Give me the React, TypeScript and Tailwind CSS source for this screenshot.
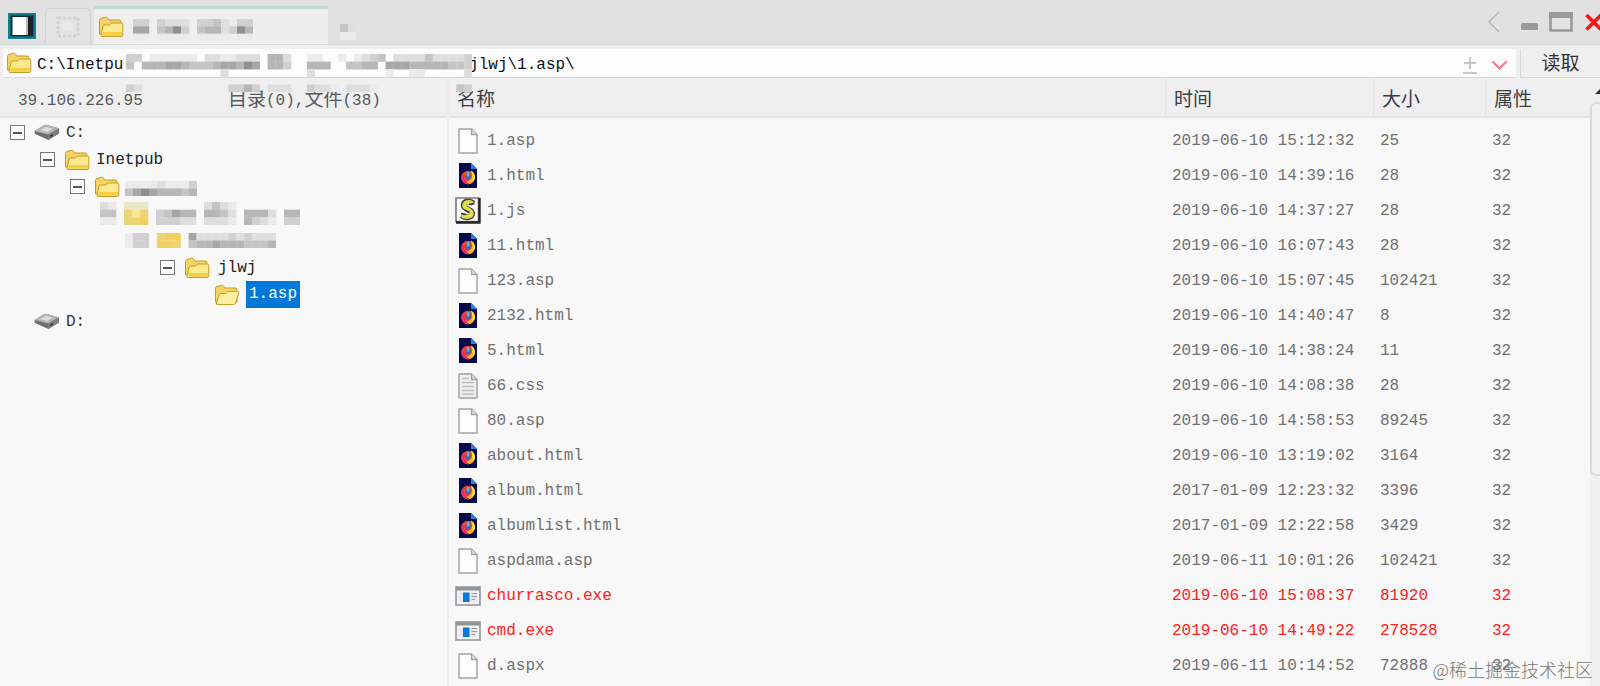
import { useState } from "react";

type Kind = "page" | "html" | "script" | "text" | "exe";

type FileRow = {
  name: string;
  time: string;
  size: string;
  kind: Kind;
};

const files: FileRow[] = [
  { name: "1.asp", time: "2019-06-10 15:12:32", size: "25", kind: "page" },
  { name: "1.html", time: "2019-06-10 14:39:16", size: "28", kind: "html" },
  { name: "1.js", time: "2019-06-10 14:37:27", size: "28", kind: "script" },
  { name: "11.html", time: "2019-06-10 16:07:43", size: "28", kind: "html" },
  { name: "123.asp", time: "2019-06-10 15:07:45", size: "102421", kind: "page" },
  { name: "2132.html", time: "2019-06-10 14:40:47", size: "8", kind: "html" },
  { name: "5.html", time: "2019-06-10 14:38:24", size: "11", kind: "html" },
  { name: "66.css", time: "2019-06-10 14:08:38", size: "28", kind: "text" },
  { name: "80.asp", time: "2019-06-10 14:58:53", size: "89245", kind: "page" },
  { name: "about.html", time: "2019-06-10 13:19:02", size: "3164", kind: "html" },
  { name: "album.html", time: "2017-01-09 12:23:32", size: "3396", kind: "html" },
  { name: "albumlist.html", time: "2017-01-09 12:22:58", size: "3429", kind: "html" },
  { name: "aspdama.asp", time: "2019-06-11 10:01:26", size: "102421", kind: "page" },
  { name: "churrasco.exe", time: "2019-06-10 15:08:37", size: "81920", kind: "exe" },
  { name: "cmd.exe", time: "2019-06-10 14:49:22", size: "278528", kind: "exe" },
  { name: "d.aspx", time: "2019-06-11 10:14:52", size: "72888", kind: "page" },
];

// one letter per mosaic block, light to dark, plus a few yellows for folders
const shades: Record<string, string> = {
  a: "#ebebeb",
  b: "#dedede",
  c: "#d0d0d0",
  d: "#c4c4c4",
  e: "#b6b6b6",
  f: "#a6a6a6",
  g: "#909090",
  w: "#f8ea92",
  y: "#ebe6c6",
  Y: "#e9d578",
  o: "#f0d060",
};

const tabMosaic = ["cc cbbb ccdbacc", "ff degc deebcge", "aa aaaa aaaa aa"];
const pathMosaic = [
  "cc aaaaaa bbaabbb eeb  aa  a abcd bbbbdbbbbc",
  "d eeeffedddeffegf eec  eee  ddee fffeeeeeddc",
  "            b          b         a  aa     b",
  "",
  "cb           ccec bbb  cbba bbba          dc",
];

function Mosaic({ rows, width, height, className }: { rows: string[]; width: number; height: number; className?: string }) {
  const cols = Math.max(...rows.map((row) => row.length));
  return (
    <svg
      width={width}
      height={height}
      viewBox={`0 0 ${cols} ${rows.length}`}
      preserveAspectRatio="none"
      className={className}
      aria-hidden="true"
    >
      {rows.map((row, y) =>
        row.split("").map((c, x) => shades[c] && <rect key={`${x}-${y}`} x={x} y={y} width="1.03" height="1.03" fill={shades[c]} />)
      )}
    </svg>
  );
}

function Folder({ open = false }: { open?: boolean }) {
  return (
    <svg width="26" height="22" viewBox="0 0 26 22" className="shrink-0" aria-hidden="true">
      <path d="M1.5 18V4.5Q1.5 3 3 2.5L7.5 1.2Q9 1 9.6 2.2L10.5 4H21Q23 4 23 6V18Z" fill="#f3d465" stroke="#c39a2a" />
      {open ? (
        <path d="M3 20.5Q1.8 20.5 2.3 19L5.5 10.5Q6 9.5 7 9.5H12L14 7.5H23.5Q25.3 7.5 24.8 9L21.5 19.2Q21 20.5 19.5 20.5Z" fill="#fdf0a0" stroke="#c79c22" />
      ) : (
        <>
          <path d="M4 20.5Q3 20.5 3 19.5L5 10Q5.2 9 6.3 9H11.5L13.5 7H23.5Q24.8 7 24.8 8.3V18.8Q24.8 20.5 23 20.5Z" fill="#fbe98f" stroke="#c79c22" />
          <path d="M4.5 16H24V18.6Q24 19.8 22.8 19.8H4.6Z" fill="#f3cf48" />
        </>
      )}
    </svg>
  );
}

function Drive() {
  return (
    <svg width="26" height="17" viewBox="0 0 26 17" className="shrink-0" aria-hidden="true">
      <path d="M0.5 7L10 1.2Q11.5 .6 13 1L25 4.5V9.5L14.5 16L1 10Z" fill="#6d6d6d" />
      <path d="M0.5 7L10 1.2Q11.5 .6 13 1L25 4.5L14 10.5Z" fill="#b4b4b4" />
      <path d="M6 6.2L12 3L19 4.8L13.5 8Z" fill="#dcdcdc" />
      <path d="M14 10.5V16L25 9.5V4.5Z" fill="#7e7e7e" />
      <path d="M16 12.5L19 10.8" stroke="#333" strokeWidth="1.5" />
    </svg>
  );
}

function FileIcon({ kind }: { kind: Kind }) {
  if (kind === "html") {
    return (
      <svg width="18" height="25" viewBox="0 0 18 25" aria-hidden="true">
        <path d="M0 0H12L18 6V25H0Z" fill="#050a4c" />
        <path d="M12 0L18 6H12Z" fill="#2f7fe0" />
        <circle cx="9" cy="14.5" r="6.8" fill="#f4402f" />
        <path d="M5 19.5Q9 22.5 13 20Q17 16.5 15.5 11.5Q14 8.5 12 7.5Q13.5 12 12.5 15.5Q10 18.5 5 19.5Z" fill="#fdb62c" />
        <path d="M2.2 13Q2 18.5 6.5 20.8Q9 21.5 10 20.5Q5 18.5 4.5 12Z" fill="#ee2a6c" />
        <path d="M12 7.5Q17 11 15.8 16Q15 17.5 13.5 18Q14.5 12.5 12 7.5Z" fill="#ffe94a" />
        <circle cx="9" cy="13.8" r="2.8" fill="#4d62a8" />
        <path d="M9 9V13.5" stroke="#58b8d8" strokeWidth="2.4" />
      </svg>
    );
  }
  if (kind === "script") {
    return (
      <svg width="26" height="27" viewBox="0 0 26 27" aria-hidden="true">
        <path d="M1 1H23.5V24.5H1Z" fill="#fff" stroke="#777" strokeWidth="1.6" />
        <path d="M24.5 1V25.5H1" fill="none" stroke="#222" strokeWidth="2.4" />
        <path d="M18.5 6.5C14 2.5 7 4.5 9 9.5C11 13 18.5 12.5 17 17.5C15.5 21.5 9 20.5 6.5 18.5" fill="none" stroke="#444" strokeWidth="5.8" />
        <path d="M17.5 6.5C14 3.5 8 5.5 9.5 9.5C11 12.5 18 13 16.5 17.5C15 20.5 9 20 7 18.5" fill="none" stroke="#e3e04b" strokeWidth="4" />
        <path d="M14 7.5L19.5 6.5M9.5 13L14.5 15.5M6 16.5L11 17.5" stroke="#333" strokeWidth="1.4" />
      </svg>
    );
  }
  if (kind === "exe") {
    return (
      <svg width="26" height="20" viewBox="0 0 26 20" aria-hidden="true">
        <path d="M1 1H25V19H1Z" fill="#f3f3f3" stroke="#8f9499" strokeWidth="1.6" />
        <path d="M1 1H25V4.5H1Z" fill="#8f9499" />
        <path d="M4 7H22V16.5H4Z" fill="#e6eaee" />
        <path d="M8 6.5H14.5V16H8Z" fill="#0b78d8" />
        <path d="M16.5 7.5H22M16.5 10.5H22M16.5 13.5H20" stroke="#9a9a9a" strokeWidth="1.2" />
      </svg>
    );
  }
  return (
    <svg width="20" height="26" viewBox="0 0 20 26" aria-hidden="true">
      <path
        d="M1 1.5Q1 1 1.5 1H13.5L19 6.5V24.5Q19 25 18.5 25H1.5Q1 25 1 24.5Z"
        fill={kind === "text" ? "#f0f0f0" : "#fcfcfc"}
        stroke="#a3a3a3"
        strokeWidth="1.5"
      />
      <path d="M13.5 1V6.5H19" fill="#dcdcdc" stroke="#a3a3a3" strokeWidth="1.3" />
      {kind === "text" && <path d="M4 5.5H11M4 9.5H16M4 13.5H16M4 17.5H16M4 21H16" stroke="#bcbcbc" strokeWidth="1.4" />}
    </svg>
  );
}

function Expander() {
  return (
    <button type="button" aria-label="collapse" className="grid size-[15px] shrink-0 place-items-center border border-[#777] bg-[#fbfbfb]">
      <span className="h-[2px] w-[9px] bg-[#555]" />
    </button>
  );
}

function TitleBar() {
  return (
    <header className="flex h-[45px] items-end border-b border-[#d3dcda] bg-[#e1e1e1]">
      <button type="button" aria-label="panel" className="mb-1 ml-2 h-7 w-7">
        <svg width="28" height="28" viewBox="0 0 28 28" aria-hidden="true">
          <path d="M0 1H28V27H0Z" fill="#12818f" />
          <path d="M2.5 3.5H25.5V24.5H2.5Z" fill="#0c2d38" />
          <path d="M4.5 5H18V23H4.5Z" fill="#fff" />
          <path d="M18 5H20V23H18Z" fill="#b9b9b9" />
          <path d="M20 5H23V23H20Z" fill="#222" />
        </svg>
      </button>
      <button type="button" aria-label="view" className="ml-[9px] grid h-9 w-[46px] place-items-center rounded-t-md border border-b-0 border-[#ced2d1] bg-[#e3e3e3]">
        <svg width="24" height="22" viewBox="0 0 24 22" aria-hidden="true">
          <path d="M2 2H22V20H2Z" fill="none" stroke="#d2d2d2" strokeWidth="3" strokeDasharray="3 2" />
          <path d="M7 7H17V15H7Z" fill="#e9e9e9" />
        </svg>
      </button>
      <button type="button" aria-label="tab" className="ml-[3px] flex h-[38px] w-[234px] items-center border-t-[3px] border-[#c3d7d2] bg-[#eeeeee] pl-1">
        <Folder />
        <Mosaic rows={tabMosaic} width={120} height={22} className="ml-[9px] mt-[6px]" />
      </button>
      <Mosaic rows={["db", "aa"]} width={16} height={16} className="mb-1 ml-3" />
      <div className="ml-auto flex h-full items-center">
        <button type="button" aria-label="back" className="mr-5">
          <svg width="14" height="22" viewBox="0 0 14 22" aria-hidden="true">
            <path d="M12 1L2 11L12 21" fill="none" stroke="#b9b9b9" strokeWidth="1.6" />
          </svg>
        </button>
        <button type="button" aria-label="minimize" className="mr-[11px] pt-2">
          <svg width="17" height="7" viewBox="0 0 17 7" aria-hidden="true">
            <rect width="17" height="7" rx="1.5" fill="#999" />
          </svg>
        </button>
        <button type="button" aria-label="maximize" className="mr-3">
          <svg width="24" height="20" viewBox="0 0 24 20" aria-hidden="true">
            <path d="M1.5 1.5H22.5V18.5H1.5Z" fill="#e4e4e4" stroke="#999" strokeWidth="2.6" />
            <path d="M0 0H24V6H0Z" fill="#999" />
          </svg>
        </button>
        <button type="button" aria-label="close" className="w-[15px] overflow-hidden">
          <svg width="18" height="18" viewBox="0 0 18 18" aria-hidden="true">
            <path d="M1.5 2L16 16.5M16 2L1.5 16.5" stroke="#f11" strokeWidth="3.6" />
          </svg>
        </button>
      </div>
    </header>
  );
}

function AddressBar() {
  const [path, setPath] = useState("C:\\Inetpu".padEnd(45) + "jlwj\\1.asp\\");

  return (
    <div className="relative flex h-[33px] items-end bg-[#edf0ef] pl-[3px]">
      <label className="flex h-[29px] flex-1 items-center border-b border-[#d5dad9] bg-[#fcfcfc] pl-[3px]">
        <Folder />
        <input
          aria-label="path"
          value={path}
          onChange={(e) => setPath(e.target.value)}
          className="ml-[5px] h-7 flex-1 bg-transparent pt-1 text-base text-[#111] outline-none"
        />
        <svg width="14" height="17" viewBox="0 0 14 17" className="mr-3.5 mt-1" aria-hidden="true">
          <path d="M7 0V12M1 6H13M0 16H14" stroke="#b5b5b5" strokeWidth="1.4" />
        </svg>
        <svg width="17" height="11" viewBox="0 0 17 11" className="mr-2 mt-1" aria-hidden="true">
          <path d="M1.5 1.5L8.5 8.5L15.5 1.5" fill="none" stroke="#f7808c" strokeWidth="2.4" />
        </svg>
      </label>
      <button
        type="button"
        className="ml-1 h-[29px] w-20 whitespace-nowrap border-b border-l border-[#d5dad9] bg-[#efefef] pt-1 text-[19px] leading-6 text-[#333]"
      >
        读取
      </button>
      <div className="pointer-events-none absolute left-[126px] top-[9px]">
        <Mosaic rows={pathMosaic} width={346} height={38} />
      </div>
    </div>
  );
}

function Tree() {
  return (
    <ul className="pt-px text-base text-[#333]">
      <li className="flex h-[27px] items-center pl-[10px]">
        <Expander />
        <span className="ml-[9px] mr-[6px] flex"><Drive /></span>
        C:
      </li>
      <li className="flex h-[27px] items-center pl-10 text-[#222]">
        <Expander />
        <span className="ml-[9px] mr-[6px] flex"><Folder /></span>
        Inetpub
      </li>
      <li className="flex h-[27px] items-center pl-[70px]">
        <Expander />
        <span className="ml-[9px] mr-[5px] flex"><Folder /></span>
        <Mosaic rows={["aaaabaaac", "dfgfeeede"]} width={72} height={15} className="mt-1" />
      </li>
      <li className="flex h-[27px] items-center pl-[100px]">
        <Mosaic
          rows={["ba yyy       bdba", "dd YwY cdfee eedb eeeb ee", "aa YYo cccbb bbba ecba cc"]}
          width={200}
          height={23}
        />
      </li>
      <li className="flex h-[27px] items-center pl-[125px]">
        <Mosaic rows={["acc Yoo fbbbbcbcbbb", "acc ooY deefeeeddde"]} width={151} height={15} />
      </li>
      <li className="flex h-[27px] items-center pl-40 text-[#222]">
        <Expander />
        <span className="ml-[9px] mr-[8px] flex"><Folder /></span>
        jlwj
      </li>
      <li className="flex h-[27px] items-center pl-[214px]">
        <span className="mr-[6px] flex"><Folder open /></span>
        <span className="bg-[#0078d7] px-[3px] leading-[27px] text-white">1.asp</span>
      </li>
      <li className="flex h-[27px] items-center pl-[34px]">
        <span className="mr-[6px] flex"><Drive /></span>
        D:
      </li>
    </ul>
  );
}

function FileTable() {
  return (
    <table className="flex-1 table-fixed self-start border-separate border-spacing-0 text-base">
      <colgroup>
        <col />
        <col className="w-[208px]" />
        <col className="w-[112px]" />
        <col className="w-[104px]" />
      </colgroup>
      <thead>
        <tr className="h-10 text-left text-[19px] leading-7 text-[#3a3f44]">
          <th className="border-b-2 border-r border-[#e3e3e3] bg-[#efefef] p-0 pl-2 pt-2 font-normal">名称</th>
          <th className="border-b-2 border-r border-[#e3e3e3] bg-[#efefef] p-0 pl-2 pt-2 font-normal">时间</th>
          <th className="border-b-2 border-r border-[#e3e3e3] bg-[#efefef] p-0 pl-2 pt-2 font-normal">大小</th>
          <th className="border-b-2 border-[#e3e3e3] bg-[#efefef] p-0 pl-2 pt-2 font-normal">属性</th>
        </tr>
      </thead>
      <tbody className="before:block before:h-[5px]">
        {files.map((file) => (
          <tr key={file.name} className={file.kind === "exe" ? "h-[35px] text-[#ff2020]" : "h-[35px] text-[#707070]"}>
            <td className="p-0 pl-[6px]">
              <span className="flex items-center gap-[6px]">
                <span className="flex w-[26px] justify-center">
                  <FileIcon kind={file.kind} />
                </span>
                {file.name}
              </span>
            </td>
            <td className="p-0 pl-[6px]">{file.time}</td>
            <td className="p-0 pl-[6px]">{file.size}</td>
            <td className="p-0 pl-[6px]">32</td>
          </tr>
        ))}
      </tbody>
    </table>
  );
}

export default function App() {
  return (
    <div className="relative flex min-h-screen flex-col overflow-hidden bg-[#f8f8f8] font-['Liberation_Mono','Noto_Sans_CJK_SC',monospace]">
      <TitleBar />
      <AddressBar />
      <main className="flex flex-1">
        <aside className="w-[449px] shrink-0 border-r-2 border-[#ececec]">
          <div className="flex h-10 items-center border-b-2 border-[#e3e3e3] bg-[#efefef] pt-2 text-base text-[#55595c]">
            <span className="w-[228px] pl-[18px]">39.106.226.95</span>
            <span className="flex items-center">
              <span className="text-[19px]">目录</span>(0),<span className="text-[19px]">文件</span>(38)
            </span>
          </div>
          <Tree />
        </aside>
        <FileTable />
        <div className="flex w-[10px] flex-col bg-[#efefef]">
          <svg width="10" height="24" viewBox="0 0 10 24" aria-hidden="true">
            <path d="M5 16L10 11V16Z" fill="#333" />
          </svg>
          <div className="h-[374px] rounded-l-md border-2 border-r-0 border-[#dadada] bg-[#f1f1f1]" />
        </div>
      </main>
      <p className="absolute bottom-[3px] right-[7px] font-['Noto_Sans_CJK_SC',sans-serif] text-[18px] font-light leading-7 text-[#777]">
        @稀土掘金技术社区
      </p>
    </div>
  );
}
